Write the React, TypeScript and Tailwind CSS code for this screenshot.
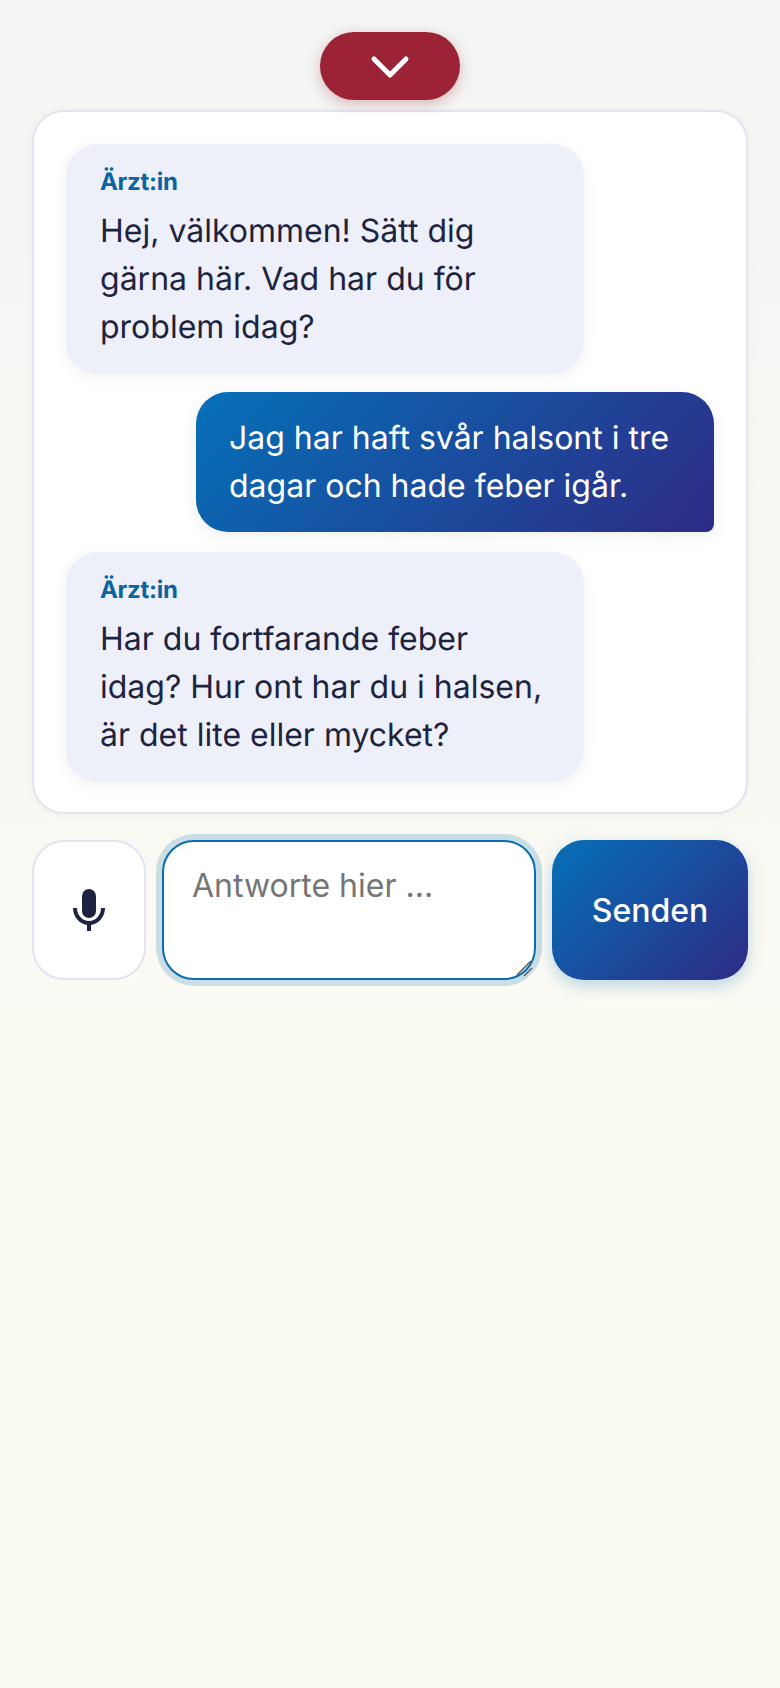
import React from 'react';

const DoctorBubble = ({ text }: { text: React.ReactNode }) => (
  <div className="w-[518px] self-start rounded-[32px] bg-[#edf0f9] px-[34px] pb-[23px] pt-[20px] shadow-[0_4px_16px_rgba(30,35,60,0.06)]">
    <div className="mb-[7px] text-[24px] font-bold leading-[36px] tracking-[-0.3px] text-[#0a64a4]">Ärzt:in</div>
    <p className="text-[32px] leading-[48px] text-[#1e2340]">{text}</p>
  </div>
);

export default function App() {
  return (
    <div className="min-h-[1688px] bg-gradient-to-b from-[#f3f5f3] to-[#fbfaf3] to-[60%] px-[32px] pt-[32px] font-['Inter',sans-serif] [text-rendering:geometricPrecision]">
      <div className="flex justify-center">
        <button className="flex h-[68px] w-[140px] items-center justify-center rounded-[34px] bg-[#9b2335] shadow-[0_4px_14px_rgba(155,35,53,0.3)]">
          <svg width="40" height="28" viewBox="0 0 40 28" fill="none">
            <path d="M4 7 L20 23 L36 7" stroke="white" strokeWidth="5" strokeLinecap="round" strokeLinejoin="round" />
          </svg>
        </button>
      </div>

      <div className="mt-[10px] flex w-[716px] flex-col rounded-[32px] border-2 border-[#e2e4f0] bg-white px-[32px] pb-[30px] pt-[32px] shadow-[0_2px_10px_rgba(30,35,60,0.04)]">
        <DoctorBubble text="Hej, välkommen! Sätt dig gärna här. Vad har du för problem idag?" />
        <div className="mb-[20px] mt-[18px] w-[518px] self-end rounded-[32px] rounded-br-[8px] bg-[linear-gradient(135deg,#0571b8,#2e2a85)] px-[33px] py-[22px] shadow-[0_4px_16px_rgba(30,35,60,0.08)]">
          <p className="text-[32px] leading-[48px] text-white">Jag har haft svår halsont i tre dagar och hade feber igår.</p>
        </div>
        <DoctorBubble text="Har du fortfarande feber idag? Hur ont har du i halsen, är det lite eller mycket?" />
      </div>

      <div className="mt-[26px] flex w-[716px] gap-[16px]">
        <button className="flex h-[140px] w-[114px] shrink-0 items-center justify-center rounded-[32px] border-2 border-[#e2e4f0] bg-white">
          <svg width="32" height="42" viewBox="0 0 32 42" fill="none">
            <rect x="9" y="0" width="14" height="29" rx="7" fill="#1e2340" />
            <path d="M2 19 A14 15 0 0 0 30 19" stroke="#1e2340" strokeWidth="4" />
            <path d="M16 34 V42" stroke="#1e2340" strokeWidth="4" />
          </svg>
        </button>
        <div className="relative h-[140px] flex-1">
          <textarea
            placeholder="Antworte hier ..."
            className="h-full w-full resize-none rounded-[32px] border-2 border-[#0a6cb0] bg-white px-[28px] py-[22px] text-[32px] leading-[44px] text-[#1e2340] shadow-[0_0_0_6px_rgba(10,108,176,0.2)] outline-none placeholder:text-[#757575]"
          />
          <svg className="absolute bottom-[2px] right-[2px]" width="20" height="20" viewBox="0 0 20 20" fill="none">
            <path d="M3 17 L17 3" stroke="#555" strokeWidth="1.5" />
            <path d="M10 18 L18 10" stroke="#555" strokeWidth="1.5" />
          </svg>
        </div>
        <button className="h-[140px] w-[196px] shrink-0 rounded-[32px] bg-[linear-gradient(135deg,#0571b8,#2e2a85)] pt-[2px] text-[32px] font-medium text-white shadow-[0_6px_16px_rgba(10,108,176,0.25)]">
          Senden
        </button>
      </div>
    </div>
  );
}
